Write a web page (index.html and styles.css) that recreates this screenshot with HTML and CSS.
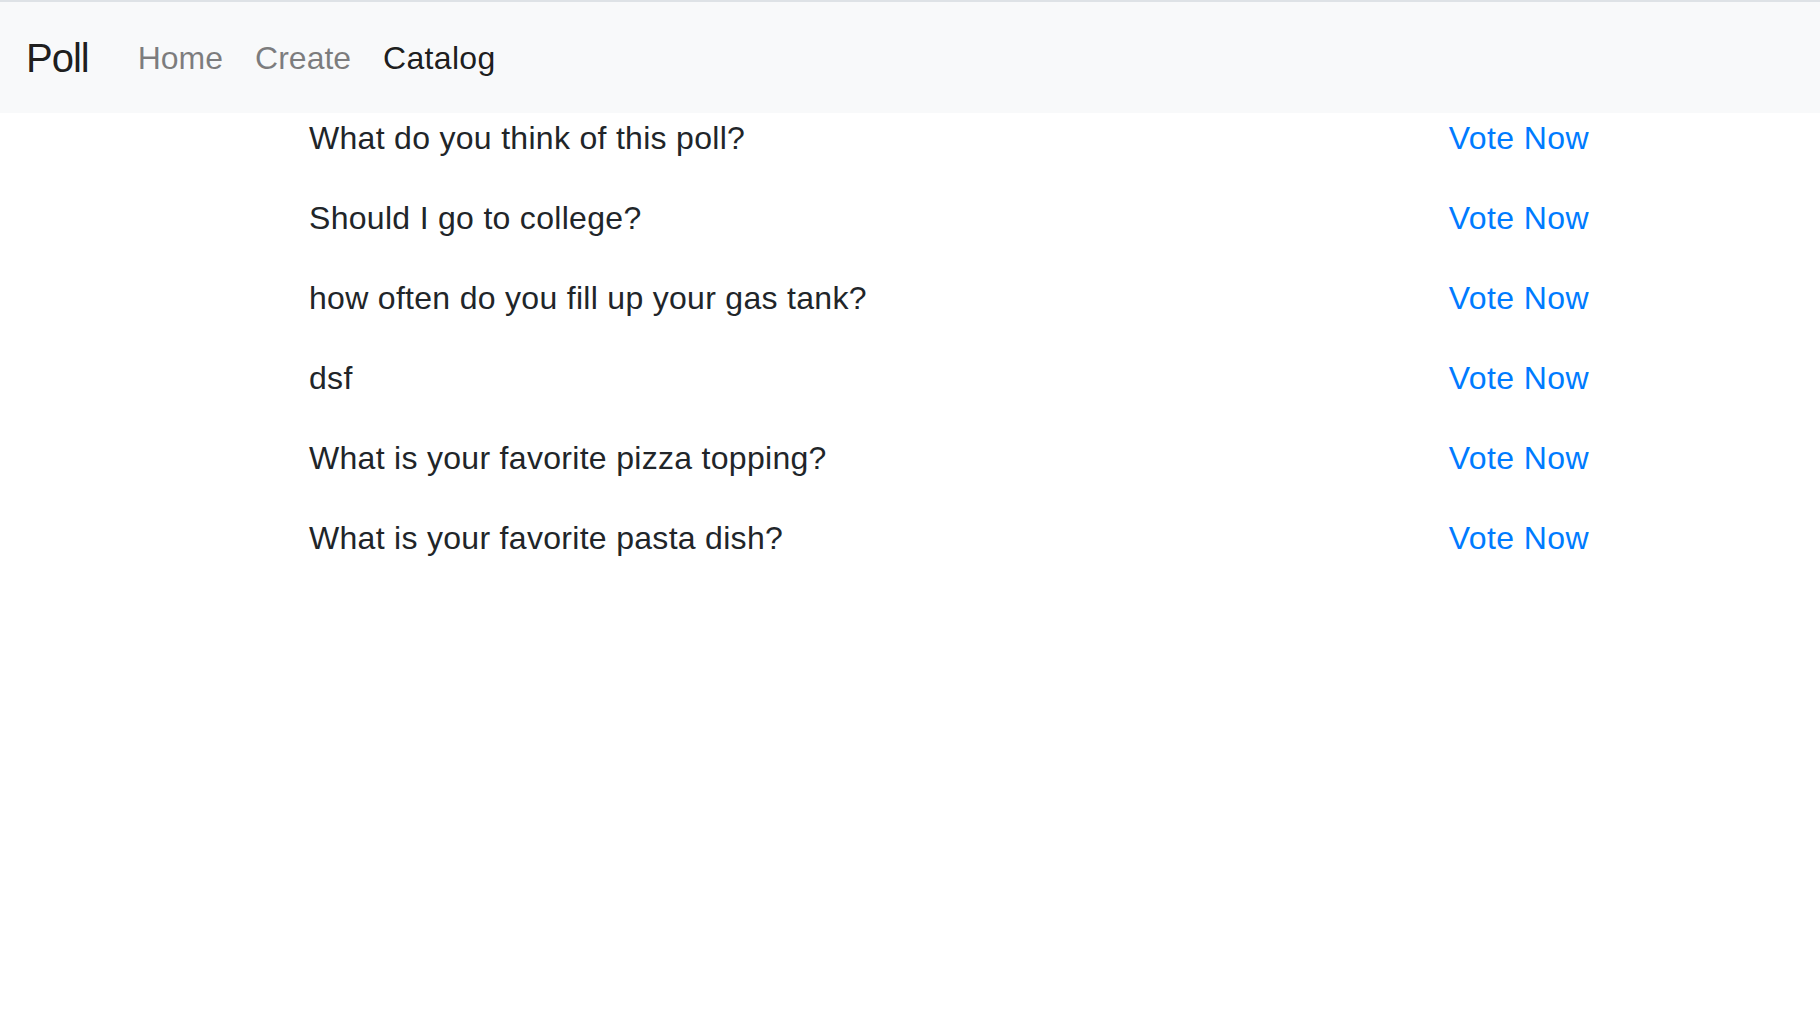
FILE: index.html
```html
<!DOCTYPE html>
<html lang="en">
<head>
<meta charset="utf-8">
<title>Poll</title>
<link rel="stylesheet" href="styles.css">
</head>
<body>
<nav class="navbar">
  <a class="brand" href="#">Poll</a>
  <ul class="nav">
    <li><a class="nav-link" href="#">Home</a></li>
    <li><a class="nav-link" href="#">Create</a></li>
    <li><a class="nav-link active" href="#">Catalog</a></li>
  </ul>
</nav>
<main class="polls">
  <div class="poll"><span class="q">What do you think of this poll?</span><a class="vote" href="#">Vote Now</a></div>
  <div class="poll"><span class="q">Should I go to college?</span><a class="vote" href="#">Vote Now</a></div>
  <div class="poll"><span class="q">how often do you fill up your gas tank?</span><a class="vote" href="#">Vote Now</a></div>
  <div class="poll"><span class="q">dsf</span><a class="vote" href="#">Vote Now</a></div>
  <div class="poll"><span class="q">What is your favorite pizza topping?</span><a class="vote" href="#">Vote Now</a></div>
  <div class="poll"><span class="q">What is your favorite pasta dish?</span><a class="vote" href="#">Vote Now</a></div>
</main>
</body>
</html>
```
FILE: styles.css
```css
* { box-sizing: border-box; }
html, body { margin: 0; padding: 0; }
body {
  font-family: "Liberation Sans", Arial, sans-serif;
  font-size: 32px;
  line-height: 48px;
  color: #212529;
  background: #fff;
}
a { text-decoration: none; }
.navbar {
  display: flex;
  align-items: center;
  border-top: 2px solid #dee2e6;
  background: #f8f9fa;
  height: 113px;
  padding: 0 26px;
}
.brand {
  font-size: 40px;
  line-height: 60px;
  padding: 10px 0;
  margin-right: 33px;
  letter-spacing: -1px;
  color: rgba(0,0,0,.9);
}
.nav {
  display: flex;
  list-style: none;
  margin: 0;
  padding: 0;
}
.nav-link {
  display: block;
  padding: 16px 16px;
  color: rgba(0,0,0,.5);
}
.nav-link.active { color: rgba(0,0,0,.9); letter-spacing: .3px; }
.polls {
  margin-left: 309px;
  width: 1280px;
  padding-top: 1px;
}
.poll {
  display: flex;
  justify-content: space-between;
  margin-bottom: 32px;
}
.q { letter-spacing: .3px; }
.vote { color: #007bff; letter-spacing: .4px; }
```
